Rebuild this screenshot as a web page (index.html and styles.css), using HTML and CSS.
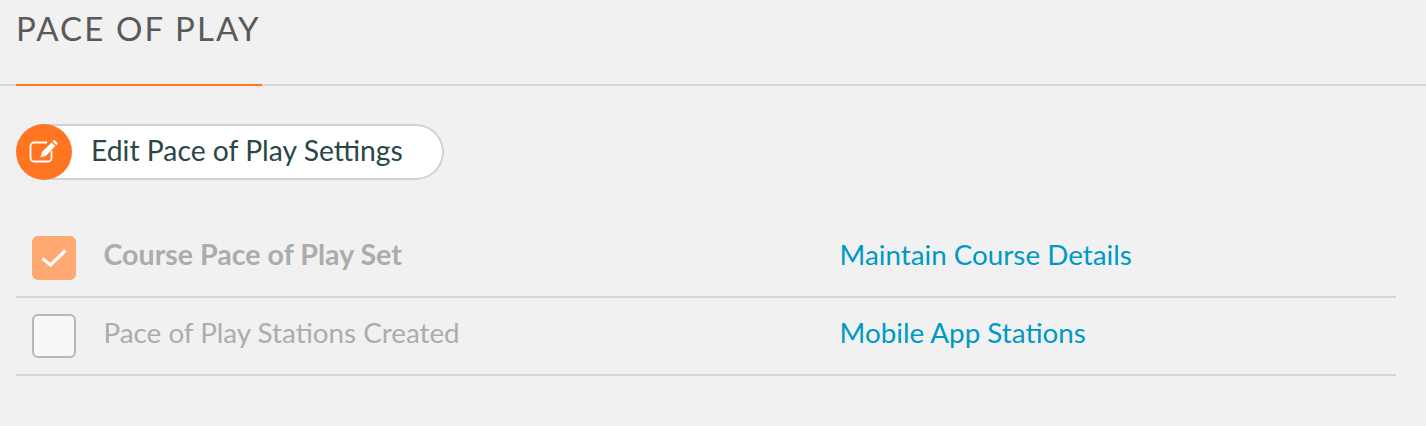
FILE: index.html
```html
<!DOCTYPE html>
<html lang="en">
<head>
  <meta charset="UTF-8">
  <title>Pace of Play</title>
  <link rel="stylesheet" href="styles.css">
</head>
<body>
  <div class="tab-header">
    <h1 class="tab-title">PACE OF PLAY</h1>
  </div>

  <a class="edit-button" href="#">
    <span class="edit-icon">
      <svg width="30" height="26" viewBox="0 0 30 26" fill="none">
        <path d="M18 3.500H5a3.500 3.500 0 0 0-3.500 3.500v12A3.500 3.500 0 0 0 5 22.500h14a3.500 3.500 0 0 0 3.500-3.500v-7" stroke="#fff" stroke-width="1.800"/>
        <path d="M25.200 0.800l3.800 3.600-1.600 1.800-3.800-3.600zM22.600 3.400l3.800 3.600-9.400 9.800-5.600 1.700 1.500-5.500z" fill="#fff"/>
      </svg>
    </span>
    <span class="edit-label">Edit Pace of Play Settings</span>
  </a>

  <ul class="checklist">
    <li class="check-row">
      <span class="check-box checked">
        <svg width="26" height="18" viewBox="0 0 26 18" fill="none">
          <path d="M1.500 9.500l8 6.500L24.500 1.500" stroke="#fff" stroke-width="3.200"/>
        </svg>
      </span>
      <span class="check-label done">Course Pace of Play Set</span>
      <a class="check-link" href="#">Maintain Course Details</a>
    </li>
    <li class="check-row">
      <span class="check-box"></span>
      <span class="check-label">Pace of Play Stations Created</span>
      <a class="check-link" href="#">Mobile App Stations</a>
    </li>
  </ul>
</body>
</html>
```

FILE: styles.css
```css
/* General Styles */
body {
  font-family: 'Lato', 'Open Sans', sans-serif;
  background-color: #f1f1f1;
  margin: 0;
  padding: 0;
}

/* Header */
.tab-header {
  height: 84px;
  border-bottom: 2px solid #d6d6d6;
  padding-left: 16px;
}

.tab-title {
  width: 246px;
  height: 84px;
  margin: 0;
  border-bottom: 2px solid #ff7522;
  font-size: 33px;
  line-height: 56px;
  font-weight: 400;
  letter-spacing: 2.100px;
  color: #595959;
  white-space: nowrap;
}

/* Edit button */
.edit-button {
  display: flex;
  align-items: center;
  width: 428px;
  height: 56px;
  box-sizing: border-box;
  margin: 38px 0 0 16px;
  background-color: #fff;
  border: 2px solid #d2d2d2;
  border-left: none;
  border-radius: 28px;
  text-decoration: none;
}

.edit-icon {
  display: flex;
  align-items: center;
  justify-content: center;
  width: 56px;
  height: 56px;
  flex-shrink: 0;
  margin: -2px 0;
  border-radius: 50%;
  background-color: #ff7522;
}

.edit-label {
  margin: 0 0 5px 19px;
  font-size: 28.300px;
  color: #2a4747;
  white-space: nowrap;
}

/* Checklist */
.checklist {
  list-style: none;
  margin: 40px 30px 0 16px;
  padding: 0;
}

.check-row {
  display: flex;
  align-items: center;
  height: 76px;
  padding-left: 16px;
  border-bottom: 2px solid #d6d6d6;
}

.check-box {
  display: flex;
  align-items: center;
  justify-content: center;
  width: 44px;
  height: 44px;
  box-sizing: border-box;
  flex-shrink: 0;
  background-color: #f8f8f8;
  border: 2px solid #b8b8b8;
  border-radius: 6px;
}

.check-box.checked {
  background-color: #ffa872;
  border: none;
}

.check-label {
  width: 736px;
  margin: 0 0 8px 27.500px;
  flex-shrink: 0;
  font-size: 27.800px;
  color: #abacae;
  white-space: nowrap;
}

.check-label.done {
  font-size: 28.600px;
  font-weight: 700;
}

.check-link {
  margin-bottom: 8px;
  font-size: 27.800px;
  color: #0099c6;
  text-decoration: none;
  white-space: nowrap;
}
```
